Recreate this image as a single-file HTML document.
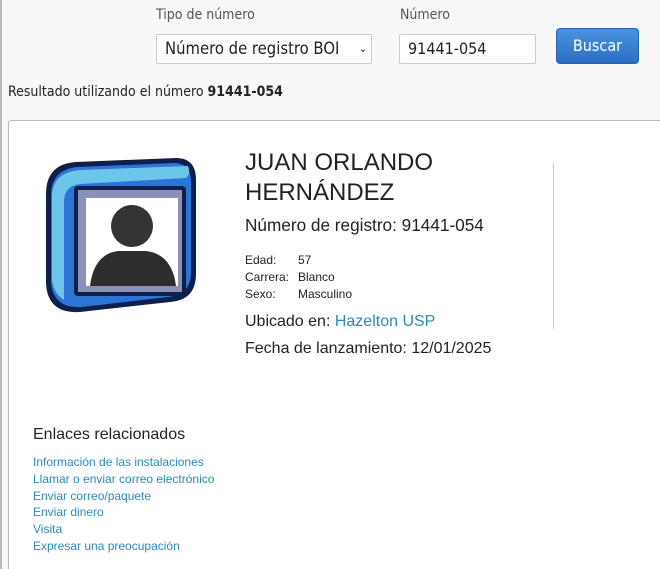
<!DOCTYPE html>
<html><head><meta charset="utf-8"><style>
*{margin:0;padding:0;box-sizing:border-box}
html{width:660px;height:569px;overflow:hidden}
body{width:660px;height:569px;overflow:hidden;background:#f8f8f8;font-family:"Liberation Sans",sans-serif;color:#222;position:relative}
.lb{position:absolute;left:0;top:0;width:2px;height:569px;background:#bbb}
.t{position:absolute;font-family:"DejaVu Sans Condensed","DejaVu Sans",sans-serif}
.lab{color:#555;font-size:14px}
.box{position:absolute;background:#fff;border:1px solid #ccc;border-radius:2px;font-size:16px;font-family:"DejaVu Sans Condensed","DejaVu Sans",sans-serif;padding:0 8px;line-height:28px;color:#222}
.btn{position:absolute;left:556px;top:28px;width:83px;height:36px;border-radius:4px;background:linear-gradient(#4a93dd,#2a6ec5);border:1px solid #2563b3;color:#fff;font-size:16px;text-align:center;line-height:34px;font-family:"DejaVu Sans Condensed","DejaVu Sans",sans-serif}
.card{position:absolute;left:8px;top:120px;width:680px;height:460px;background:#fff;border:1px solid #bbb;border-radius:3px}
</style></head><body>
<div class="lb"></div>
<div class="t lab" style="left:156px;top:7px">Tipo de número</div>
<div class="t lab" style="left:400px;top:7px">Número</div>
<div class="box" style="left:156px;top:34px;width:216px;height:30px;font-size:16.5px">Número de registro BOI <span style="font-size:11px;position:absolute;right:4px">&#8964;</span></div>
<div class="box" style="left:399px;top:34px;width:137px;height:30px">91441-054</div>
<div class="btn">Buscar</div>
<div class="t" style="left:8px;top:84px;font-size:14px">Resultado utilizando el número <b>91441-054</b></div>
<div class="card"></div>
<svg style="position:absolute;left:40px;top:154px" width="160" height="160" viewBox="0 0 160 160">
<path d="M6 40 Q6 10 36 8 L136 4 Q156 4 156 26 L156 120 Q156 146 130 148 L40 158 Q8 160 6 130Z" fill="#0d1f4a"/>
<path d="M11 42 Q11 15 38 13 L134 9 Q151 9 151 28 L151 118 Q151 141 128 143 L42 153 Q13 155 11 128Z" fill="#2c74d6"/>
<path d="M12 40 Q14 18 40 16 L148 12 Q151 20 146 24 L40 30 Q24 32 24 48 L24 146 Q14 140 12 126Z" fill="#6cc6ea"/>
<rect x="34" y="32" width="112" height="110" rx="4" fill="#0d1f4a"/>
<rect x="38" y="36" width="104" height="102" fill="#8a90b8"/>
<rect x="46" y="44" width="92" height="88" fill="#fff"/>
<circle cx="92" cy="72" r="21" fill="#333"/>
<path d="M50 132 Q54 100 78 97 L106 97 Q132 100 136 132Z" fill="#2d2d2d"/>
</svg>
<div style="position:absolute;left:245px;top:148px;font-size:24px;line-height:30px;color:#222">JUAN ORLANDO<br>HERNÁNDEZ</div>
<div style="position:absolute;left:245px;top:215px;font-size:17.2px">Número de registro: 91441-054</div>
<div style="position:absolute;left:245px;top:252px;font-size:12px;line-height:17px">Edad:<br>Carrera:<br>Sexo:</div>
<div style="position:absolute;left:298px;top:252px;font-size:12px;line-height:17px">57<br>Blanco<br>Masculino</div>
<div style="position:absolute;left:245px;top:313px;font-size:16px">Ubicado en: <span style="color:#2a8ab8">Hazelton USP</span></div>
<div style="position:absolute;left:245px;top:340px;font-size:16px">Fecha de lanzamiento: 12/01/2025</div>
<div style="position:absolute;left:553px;top:163px;width:1px;height:166px;background:#ccc"></div>
<div style="position:absolute;left:33px;top:426px;font-size:16px">Enlaces relacionados</div>
<div style="position:absolute;left:33px;top:454px;font-size:12px;line-height:16.8px;color:#2a8ab8">Información de las instalaciones<br>Llamar o enviar correo electrónico<br>Enviar correo/paquete<br>Enviar dinero<br>Visita<br>Expresar una preocupación</div>
</body></html>
